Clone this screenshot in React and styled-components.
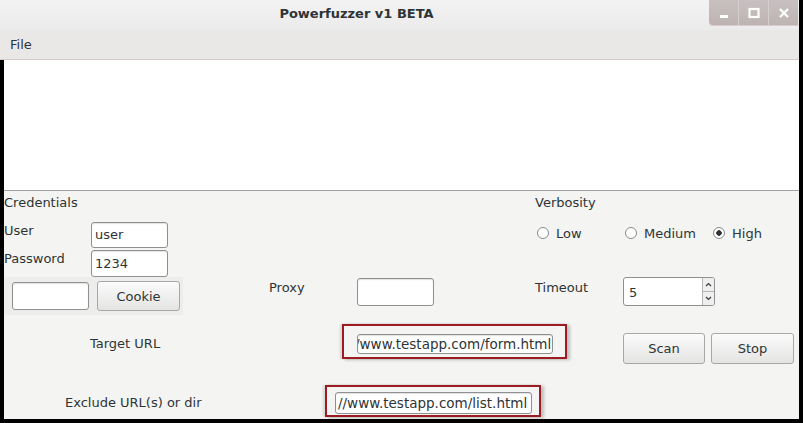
import React from "react";
import styled, { createGlobalStyle } from "styled-components";

const GlobalStyle = createGlobalStyle`
  html, body { margin: 0; padding: 0; background: #000; }
  body { font-family: "DejaVu Sans", "Liberation Sans", sans-serif; }
`;

const TEXT = "#2e3436";

// ─── window chrome ───────────────────────────────────────────

const Page = styled.div`
  width: 803px;
  height: 423px;
  background: #000;
  overflow: hidden;
`;

const Window = styled.div`
  width: 799px;
  height: 419px;
  display: flex;
  flex-direction: column;
  background: #f4f4f2;
  color: ${TEXT};
  font-size: 13px;
`;

const TitleBar = styled.div`
  height: 30px;
  display: flex;
  align-items: flex-start;
  background: linear-gradient(#f3f3f3, #ebebeb);
`;

const Title = styled.div`
  flex: 1;
  text-align: center;
  font-weight: bold;
  line-height: 28px;
  padding-left: 4px;
`;

const Controls = styled.div`
  display: flex;
  height: 25px;
  margin-right: 1px;
  border-radius: 0 0 0 4px;
  overflow: hidden;
  background: linear-gradient(#c9c1c1, #bdb3b3);
  box-shadow: 0 1px 0 #d8cccc;
`;

const ControlBtn = styled.div`
  width: 29px;
  display: flex;
  align-items: center;
  justify-content: center;
  & + & { border-left: 1px solid #d6cfcf; }
`;

const MenuBar = styled.div`
  height: 29px;
  display: flex;
  align-items: center;
  padding-left: 10px;
  background: #e9e8e7;
  border-bottom: 1px solid #d6c9c9;
`;

const Body = styled.div`
  flex: 1;
  display: flex;
  flex-direction: column;
  border-left: 4px solid #000;
`;

const LogArea = styled.div`
  height: 130px;
  background: #fff;
  border-bottom: 1px solid #a2a2a2;
`;

// ─── form parts ──────────────────────────────────────────────

const TopSection = styled.div`
  display: grid;
  grid-template-columns: 531px 1fr;
`;

const Column = styled.div`
  display: flex;
  flex-direction: column;
`;

const Heading = styled.div`
  height: 24px;
  line-height: 24px;
  margin-bottom: 6px;
`;

const Row = styled.div`
  display: flex;
  align-items: flex-start;
  height: ${p => p.h}px;
  padding-top: ${p => p.pt || 0}px;
  padding-left: ${p => p.pl || 0}px;
  box-sizing: border-box;
`;

const Label = styled.div`
  width: ${p => p.w}px;
  padding-left: ${p => p.pl || 0}px;
  margin-left: ${p => p.ml || 0}px;
  margin-top: ${p => p.mt || 0}px;
  line-height: ${p => p.lh || 20}px;
  box-sizing: border-box;
  white-space: nowrap;
`;

const TextBox = styled.div`
  width: ${p => p.w}px;
  height: ${p => p.h}px;
  margin-top: ${p => p.mt || 0}px;
  margin-left: ${p => p.ml || 0}px;
  box-sizing: border-box;
  background: #fff;
  border: 1px solid #8f9090;
  border-radius: 3px;
  box-shadow: inset 0 1px 1px rgba(0, 0, 0, 0.12);
  padding-left: ${p => p.indent ?? 3}px;
  line-height: ${p => p.h - 2}px;
  font-size: ${p => p.fs || 13}px;
  white-space: nowrap;
  overflow: hidden;
`;

const Clip = styled.span`
  display: inline-block;
  margin-left: ${p => p.shift}px;
`;

const Button = styled.div`
  width: ${p => p.w}px;
  height: ${p => p.h}px;
  margin-top: ${p => p.mt || 0}px;
  margin-left: ${p => p.ml || 0}px;
  box-sizing: border-box;
  border: 1px solid #a8a8a8;
  border-radius: 3px;
  background: linear-gradient(#fbfbfb, #e4e4e3);
  display: flex;
  align-items: center;
  justify-content: center;
`;

const CookieGroup = styled.div`
  width: 179px;
  height: 38px;
  display: flex;
  align-items: flex-start;
  background: #ededeb;
`;

const RadioItem = styled.div`
  width: 88px;
  display: flex;
  align-items: center;
  gap: 7px;
  height: 22px;
`;

const RadioDot = styled.span`
  width: 12px;
  height: 12px;
  box-sizing: border-box;
  border-radius: 50%;
  border: 1px solid #8a8a8a;
  background: radial-gradient(circle, ${p => (p.on ? "#2e3436 0 2.5px, #fff 3px" : "#fff 0")});
`;

const Spin = styled.div`
  width: 92px;
  height: 29px;
  box-sizing: border-box;
  display: flex;
  background: #fff;
  border: 1px solid #8f9090;
  border-radius: 3px;
  overflow: hidden;
`;

const SpinValue = styled.div`
  flex: 1;
  padding-left: 5px;
  line-height: 29px;
`;

const SpinArrows = styled.div`
  width: 11px;
  display: flex;
  flex-direction: column;
  border-left: 1px solid #b5b5b5;
  background: #efefef;
`;

const SpinArrow = styled.div`
  flex: 1;
  display: flex;
  align-items: center;
  justify-content: center;
  & + & { border-top: 1px solid #b5b5b5; }
`;

const Highlight = styled.div`
  width: ${p => p.w}px;
  height: ${p => p.h}px;
  box-sizing: border-box;
  border: 2px solid #9d1c22;
  padding: ${p => p.pad};
  box-shadow: 3px 1px 3px rgba(0, 0, 0, 0.22), -2px 0 2px rgba(0, 0, 0, 0.12);
`;

const Caret = ({ up }) => (
  <svg width="7" height="5" viewBox="0 0 7 5">
    <path d={up ? "M1 4 L3.5 1.5 L6 4" : "M1 1 L3.5 3.5 L6 1"} stroke="#3a3a3a" strokeWidth="1.2" fill="none" />
  </svg>
);

export default function App() {
  return (
    <Page>
      <GlobalStyle />
      <Window>
        <TitleBar>
          <Title>Powerfuzzer v1 BETA</Title>
          <Controls>
            <ControlBtn>
              <svg width="10" height="12" viewBox="0 0 10 12">
                <rect x="1" y="8" width="8" height="3" fill="#fff" />
              </svg>
            </ControlBtn>
            <ControlBtn>
              <svg width="12" height="12" viewBox="0 0 12 12">
                <rect x="1.5" y="2" width="9" height="8" stroke="#fff" strokeWidth="2.2" fill="none" />
              </svg>
            </ControlBtn>
            <ControlBtn>
              <svg width="12" height="12" viewBox="0 0 12 12">
                <path d="M2 2 L10 10 M10 2 L2 10" stroke="#fff" strokeWidth="2.4" />
              </svg>
            </ControlBtn>
          </Controls>
        </TitleBar>
        <MenuBar>File</MenuBar>

        <Body>
          <LogArea />

          <TopSection>
            <Column>
              <Heading>Credentials</Heading>
              <Row h={28}>
                <Label w={87}>User</Label>
                <TextBox w={77} h={26} mt={1}>user</TextBox>
              </Row>
              <Row h={28}>
                <Label w={87}>Password</Label>
                <TextBox w={77} h={27} mt={1}>1234</TextBox>
              </Row>
            </Column>
            <Column>
              <Heading>Verbosity</Heading>
              <Row h={56} pt={1} pl={2}>
                <RadioItem><RadioDot />Low</RadioItem>
                <RadioItem><RadioDot />Medium</RadioItem>
                <RadioItem><RadioDot on />High</RadioItem>
              </Row>
            </Column>
          </TopSection>

          <Row h={38}>
            <CookieGroup>
              <TextBox w={77} h={28} mt={5} ml={8} />
              <Button w={83} h={30} mt={4} ml={8}>Cookie</Button>
            </CookieGroup>
            <Label w={88} ml={86} lh={22}>Proxy</Label>
            <TextBox w={77} h={28} mt={1} />
            <Label w={88} ml={101} lh={22}>Timeout</Label>
            <Spin>
              <SpinValue>5</SpinValue>
              <SpinArrows>
                <SpinArrow><Caret up /></SpinArrow>
                <SpinArrow><Caret /></SpinArrow>
              </SpinArrows>
            </Spin>
          </Row>

          <Row h={60} pt={9}>
            <Label w={338} pl={86} mt={10}>Target URL</Label>
            <Highlight w={225} h={35} pad="8px 0 0 13px">
              <TextBox w={196} h={20} indent={0} fs={13.5}>
                <Clip shift={-3}>/www.testapp.com/form.html</Clip>
              </TextBox>
            </Highlight>
            <Button w={82} h={31} mt={9} ml={56}>Scan</Button>
            <Button w={83} h={31} mt={9} ml={6}>Stop</Button>
          </Row>

          <Row h={42} pt={10}>
            <Label w={321} pl={61} mt={8}>Exclude URL(s) or dir</Label>
            <Highlight w={216} h={32} pad="5px 0 0 8px">
              <TextBox w={197} h={22} indent={2} fs={13.5}>//www.testapp.com/list.html</TextBox>
            </Highlight>
          </Row>
        </Body>
      </Window>
    </Page>
  );
}
